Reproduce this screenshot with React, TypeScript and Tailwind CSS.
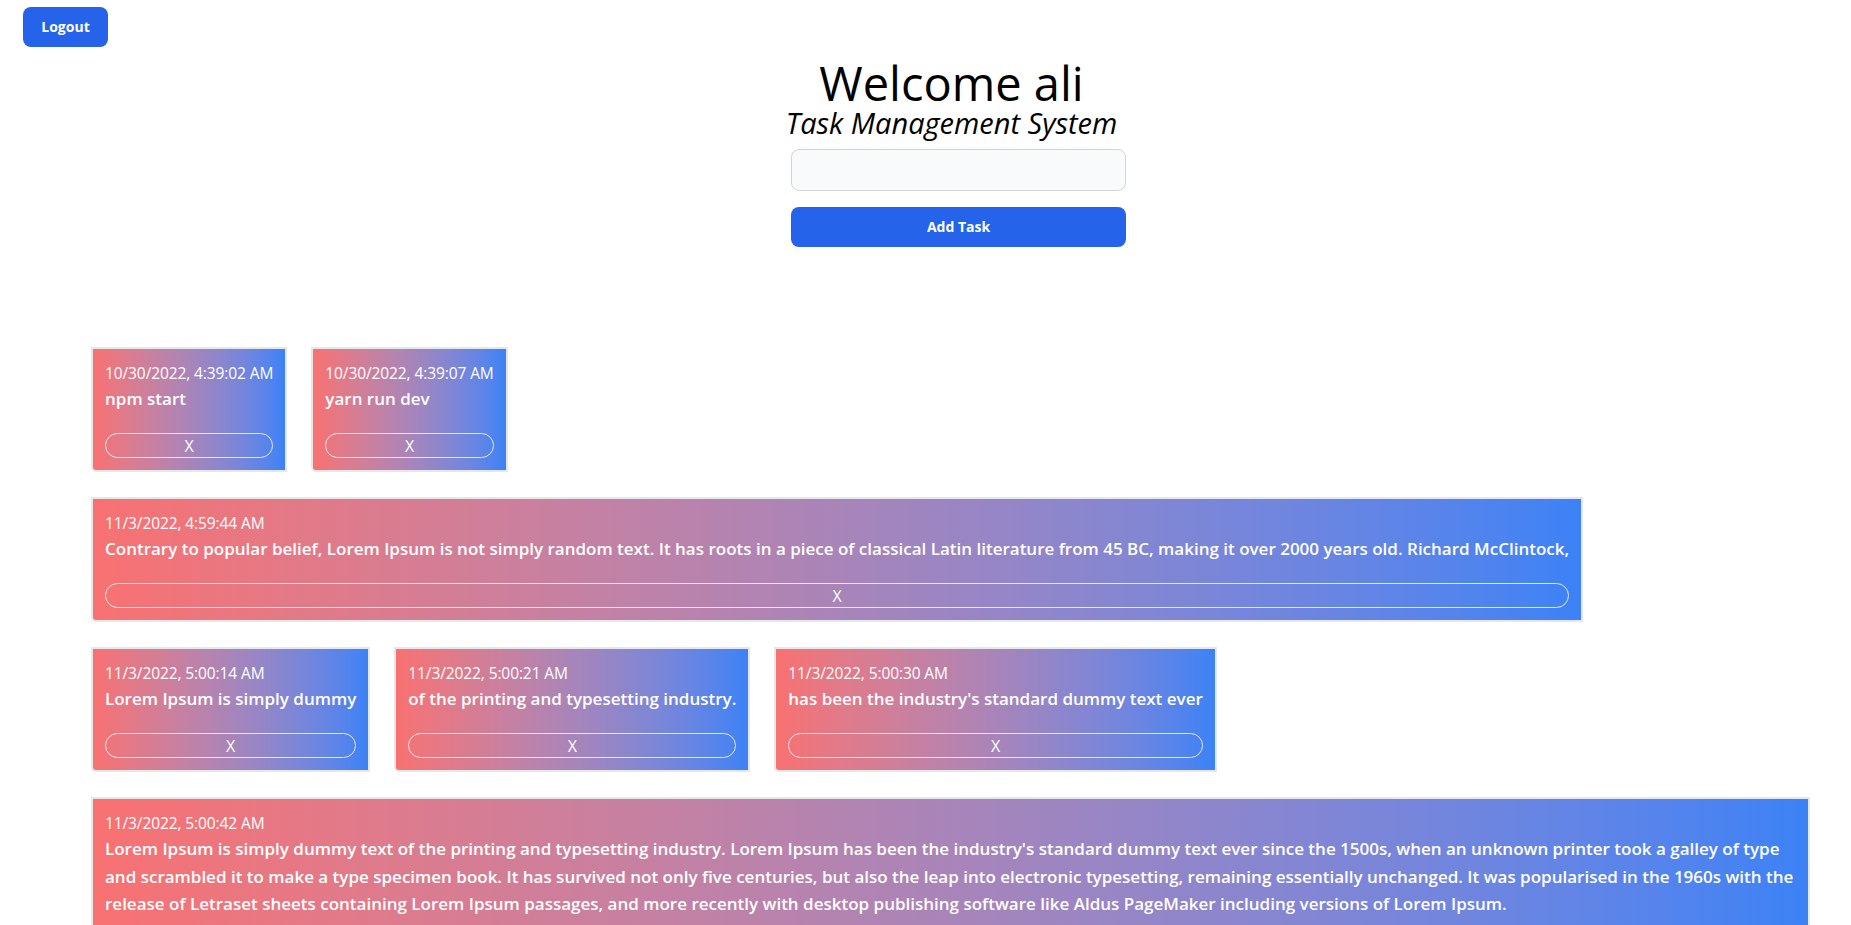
import { useState } from 'react';

type Task = {
  id: number;
  date: string;
  text: string;
};

const initialTasks: Task[] = [
  { id: 1, date: '10/30/2022, 4:39:02 AM', text: 'npm start' },
  { id: 2, date: '10/30/2022, 4:39:07 AM', text: 'yarn run dev' },
  {
    id: 3,
    date: '11/3/2022, 4:59:44 AM',
    text: 'Contrary to popular belief, Lorem Ipsum is not simply random text. It has roots in a piece of classical Latin literature from 45 BC, making it over 2000 years old. Richard McClintock,',
  },
  { id: 4, date: '11/3/2022, 5:00:14 AM', text: 'Lorem Ipsum is simply dummy' },
  { id: 5, date: '11/3/2022, 5:00:21 AM', text: 'of the printing and typesetting industry.' },
  { id: 6, date: '11/3/2022, 5:00:30 AM', text: "has been the industry's standard dummy text ever" },
  {
    id: 7,
    date: '11/3/2022, 5:00:42 AM',
    text: "Lorem Ipsum is simply dummy text of the printing and typesetting industry. Lorem Ipsum has been the industry's standard dummy text ever since the 1500s, when an unknown printer took a galley of type and scrambled it to make a type specimen book. It has survived not only five centuries, but also the leap into electronic typesetting, remaining essentially unchanged. It was popularised in the 1960s with the release of Letraset sheets containing Lorem Ipsum passages, and more recently with desktop publishing software like Aldus PageMaker including versions of Lorem Ipsum.",
  },
];

function TaskCard({ task, onRemove }: { task: Task; onRemove: (id: number) => void }) {
  return (
    <div className="border-2 border-[#e5e7eb] rounded-bl-[5px] bg-gradient-to-r from-[#f87171] to-[#3b82f6] px-3 py-3 text-white">
      <div className="text-[15.5px] tracking-[-0.1px] leading-6 font-normal whitespace-nowrap">{task.date}</div>
      <div className="text-[17px] leading-[27.5px] font-semibold mb-[20.5px]">{task.text}</div>
      <button
        onClick={() => onRemove(task.id)}
        className="w-full h-[25px] rounded-full border border-[#e5e7eb] text-[16px] leading-none text-white"
      >
        X
      </button>
    </div>
  );
}

export default function App() {
  const [tasks, setTasks] = useState<Task[]>(initialTasks);
  const [value, setValue] = useState('');

  const addTask = () => {
    if (!value.trim()) return;
    setTasks(prev => [...prev, { id: Date.now(), date: new Date().toLocaleString('en-US'), text: value }]);
    setValue('');
  };

  return (
    <main className="min-h-screen bg-white font-['Open_Sans',sans-serif]">
      <div className="pt-[7px] pl-[23px]">
        <button className="h-[40px] w-[85px] rounded-lg bg-[#2563eb] text-white text-sm font-bold">Logout</button>
      </div>

      <div className="flex flex-col items-center pl-[66px] mt-[11px]">
        <h1 className="mr-[14px] text-[47px] leading-[50px] font-normal text-black">Welcome ali</h1>
        <h2 className="mr-[14px] text-[29px] leading-[30px] italic text-black">Task Management System</h2>
        <input
          value={value}
          onChange={e => setValue(e.target.value)}
          className="mt-[11px] w-[335px] h-[42px] rounded-lg border border-[#d1d5db] bg-[#f9fafb] px-3 text-sm outline-none"
        />
        <button
          onClick={addTask}
          className="mt-[16px] w-[335px] h-[40px] rounded-lg bg-[#2563eb] text-white text-sm font-bold"
        >
          Add Task
        </button>
      </div>

      <div className="mt-[100px] pl-[91px] pr-[41px] flex flex-wrap gap-x-[24px] gap-y-[25px] pb-10">
        {tasks.map(t => (
          <TaskCard key={t.id} task={t} onRemove={id => setTasks(prev => prev.filter(x => x.id !== id))} />
        ))}
      </div>
    </main>
  );
}
